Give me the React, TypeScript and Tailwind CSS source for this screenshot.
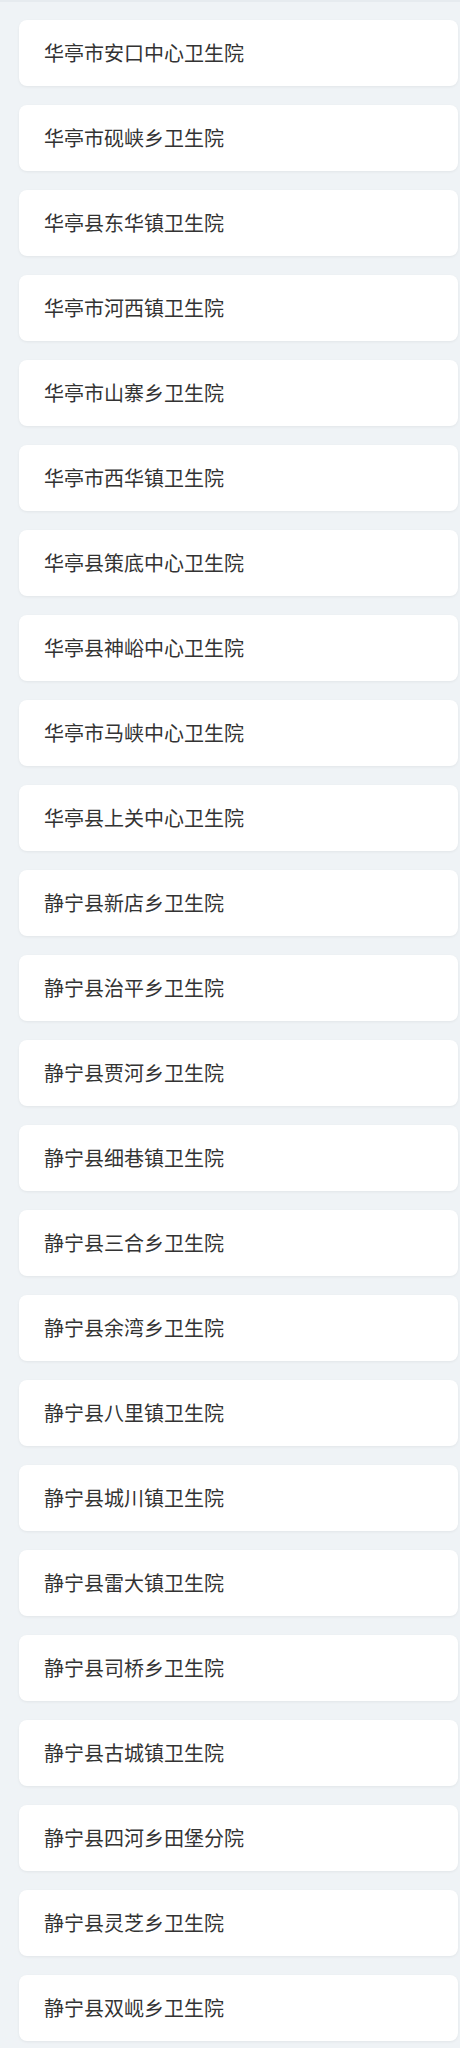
import React from "react";

const names = [
  "华亭市安口中心卫生院",
  "华亭市砚峡乡卫生院",
  "华亭县东华镇卫生院",
  "华亭市河西镇卫生院",
  "华亭市山寨乡卫生院",
  "华亭市西华镇卫生院",
  "华亭县策底中心卫生院",
  "华亭县神峪中心卫生院",
  "华亭市马峡中心卫生院",
  "华亭县上关中心卫生院",
  "静宁县新店乡卫生院",
  "静宁县治平乡卫生院",
  "静宁县贾河乡卫生院",
  "静宁县细巷镇卫生院",
  "静宁县三合乡卫生院",
  "静宁县余湾乡卫生院",
  "静宁县八里镇卫生院",
  "静宁县城川镇卫生院",
  "静宁县雷大镇卫生院",
  "静宁县司桥乡卫生院",
  "静宁县古城镇卫生院",
  "静宁县四河乡田堡分院",
  "静宁县灵芝乡卫生院",
  "静宁县双岘乡卫生院",
];

const App = () => {
  return (
    <div
      className="min-h-[2048px] bg-[#eff3f6] border-t-[2px] border-[#e6ebef]"
      style={{ fontFamily: '"Noto Sans CJK SC", "Noto Sans", sans-serif' }}
    >
      <div className="flex flex-col gap-[19px] pt-[18px] pl-[19px] pr-[2px]">
        {names.map((name) => (
          <div
            key={name}
            className="h-[66px] flex items-center pl-[25px] bg-white rounded-[8px] shadow-[0_1px_3px_rgba(0,0,0,0.06)] text-[20px] text-[#333333]"
          >
            {name}
          </div>
        ))}
      </div>
    </div>
  );
};

export default App;
